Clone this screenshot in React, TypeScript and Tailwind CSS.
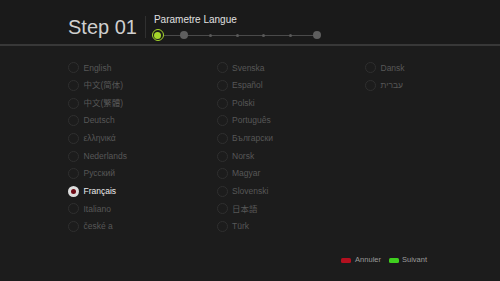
import React from "react";

const columns: string[][] = [
  ["English", "中文(简体)", "中文(繁體)", "Deutsch", "ελληνικά", "Nederlands", "Русский", "Français", "Italiano", "české a"],
  ["Svenska", "Español", "Polski", "Português", "Български", "Norsk", "Magyar", "Slovenski", "日本語", "Türk"],
  ["Dansk", "עברית"],
];

const selected = "Français";

const Radio = ({ on }: { on: boolean }) =>
  on ? (
    <span className="flex items-center justify-center w-[11px] h-[11px] rounded-full bg-[#dcdcdc]">
      <span className="w-[5px] h-[5px] rounded-full bg-[#6e0b16]" />
    </span>
  ) : (
    <span className="w-[11px] h-[11px] rounded-full border border-[#2f2f2f] bg-[#1c1c1c]" />
  );

const Stepper = () => (
  <div className="relative flex items-center justify-between w-[171px] h-[12px] mt-[3px] -ml-[2px]">
    <div className="absolute left-[6px] right-[6px] top-[5.5px] h-px bg-[#4a4a4a]" />
    {[0, 1, 2, 3, 4, 5, 6].map((i) => (
      <span key={i} className="relative flex items-center justify-center w-[12px] h-[12px]">
        {i === 0 ? (
          <span className="flex items-center justify-center w-[12px] h-[12px] rounded-full border-[1.5px] border-[#a6d62a] bg-[#1a1a1a]">
            <span className="w-[7px] h-[7px] rounded-full bg-[#a6d62a]" />
          </span>
        ) : i === 1 || i === 6 ? (
          <span className="w-[8px] h-[8px] rounded-full bg-[#5e5e5e]" />
        ) : (
          <span className="w-[3px] h-[3px] rounded-full bg-[#5a5a5a]" />
        )}
      </span>
    ))}
  </div>
);

const App: React.FC = () => {
  return (
    <div
      className="w-[500px] h-[281px] bg-[#1c1c1c] flex flex-col overflow-hidden"
      style={{ fontFamily: '"Liberation Sans", Arial, "Noto Sans CJK SC", "Noto Sans CJK JP", sans-serif' }}
    >
      <div className="h-[46px] shrink-0 flex items-start border-b-2 border-[#383838] bg-[#1a1a1a]">
        <div className="ml-[68px] mt-[14px] text-[20px] leading-[26px] text-[#cfcfcf]">Step 01</div>
        <div className="ml-[8px] mt-[16px] w-px h-[22px] bg-[#303030]" />
        <div className="ml-[8px] mt-[14px] flex flex-col">
          <div className="text-[10px] leading-[12px] text-[#e0e0e0]">Parametre Langue</div>
          <Stepper />
        </div>
      </div>

      <div className="flex pl-[68px] pt-[13px]">
        {columns.map((col, ci) => (
          <div key={ci} className="flex flex-col w-[148.5px] shrink-0">
            {col.map((lang) => {
              const on = lang === selected;
              return (
                <div key={lang} className="flex items-center gap-[4.5px] h-[17.65px]">
                  <Radio on={on} />
                  <span className={`text-[8.5px] leading-none ${on ? "text-[#ececec]" : "text-[#575757]"}`}>
                    {lang}
                  </span>
                </div>
              );
            })}
          </div>
        ))}
      </div>

      <div className="flex justify-end items-center pr-[73px] mt-[21px] gap-[8px] text-[7.5px] leading-none text-[#9a9a9a]">
        <div className="flex items-center gap-[4px]">
          <span className="w-[10px] h-[5px] rounded-[1.5px] bg-[#b3101f]" />
          <span>Annuler</span>
        </div>
        <div className="flex items-center gap-[3px]">
          <span className="w-[10px] h-[5px] rounded-[1.5px] bg-[#3fcf1f]" />
          <span>Suivant</span>
        </div>
      </div>
    </div>
  );
};

export default App;
